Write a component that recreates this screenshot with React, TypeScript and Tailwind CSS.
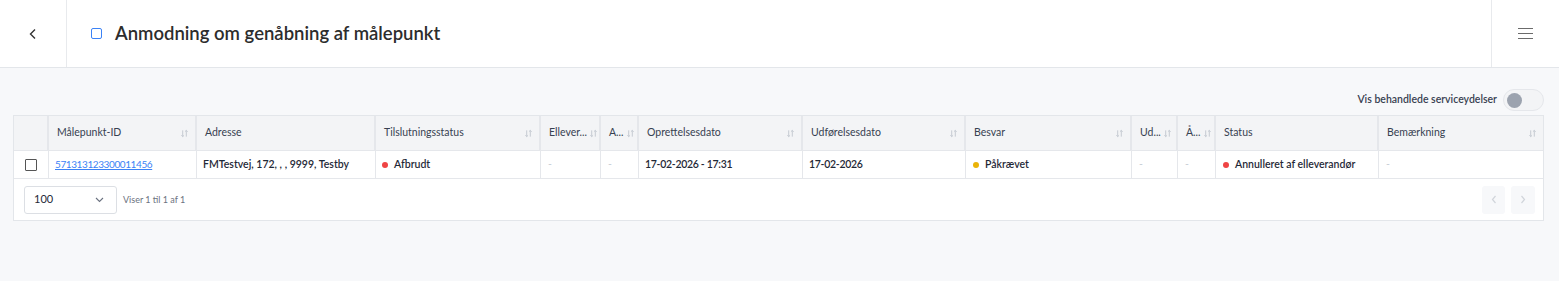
import React from 'react';

const font = { fontFamily: 'Lato, "Noto Sans", sans-serif' };

interface Column {
  label: string;
  sortable: boolean;
}

const columns: Column[] = [
  { label: 'Målepunkt-ID', sortable: true },
  { label: 'Adresse', sortable: false },
  { label: 'Tilslutningsstatus', sortable: true },
  { label: 'Ellever...', sortable: true },
  { label: 'A...', sortable: true },
  { label: 'Oprettelsesdato', sortable: true },
  { label: 'Udførelsesdato', sortable: true },
  { label: 'Besvar', sortable: true },
  { label: 'Ud...', sortable: true },
  { label: 'Å...', sortable: true },
  { label: 'Status', sortable: false },
  { label: 'Bemærkning', sortable: true },
];

const gridCols =
  'grid grid-cols-[35px_148px_179px_165px_60px_38px_164px_163px_166px_46px_38px_163px_164px]';

const SortIcon = () => (
  <svg width="9" height="9" viewBox="0 0 10 10" fill="none" stroke="#c4c9d1" strokeWidth="1.1" className="shrink-0">
    <path d="M3 1.5v7M1.5 7l1.5 1.5L4.5 7" />
    <path d="M7 8.5v-7M5.5 3L7 1.5 8.5 3" />
  </svg>
);

const Dot = ({ color }: { color: string }) => (
  <span className={`inline-block w-[6px] h-[6px] rounded-full mr-[6px] ${color}`} />
);

const Dash = () => <span className="text-[#c9ced6]">-</span>;

const App: React.FC = () => {
  return (
    <div className="w-[1559px] h-[281px] bg-[#f7f8fa] text-[#1f2937]" style={font}>
      {/* Top bar */}
      <div className="h-[68px] bg-white border-b border-[#e3e6ea] flex items-stretch">
        <div className="w-[67px] border-r border-[#e8eaed] flex items-center justify-center">
          <svg width="10" height="12" viewBox="0 0 10 12" fill="none" stroke="#333" strokeWidth="1.4">
            <path d="M7 1.5L2.5 6 7 10.5" />
          </svg>
        </div>
        <div className="flex-1 flex items-center pl-[24px]">
          <span className="w-[11px] h-[11px] border border-[#3b82f6] rounded-[2px] mr-[13px]" />
          <h1 className="text-[18.5px] font-semibold text-[#2d2d2d]">
            Anmodning om genåbning af målepunkt
          </h1>
        </div>
        <div className="w-[68px] border-l border-[#e8eaed] flex items-center justify-center">
          <svg width="15" height="13" viewBox="0 0 15 13" fill="none" stroke="#6b6b6b" strokeWidth="1.2">
            <path d="M0 1.5h15M0 6.5h15M0 11.5h15" />
          </svg>
        </div>
      </div>

      {/* Toggle row */}
      <div className="flex items-center justify-end pr-[15px] pt-[17px] h-[47px]">
        <span className="text-[10.5px] font-semibold text-[#374151] mr-[6px]">Vis behandlede serviceydelser</span>
        <div className="w-[41px] h-[22px] rounded-full bg-[#f3f4f6] border border-[#e5e7eb] flex items-center pl-[3px]">
          <span className="w-[15px] h-[15px] rounded-full bg-[#9ca3af]" />
        </div>
      </div>

      {/* Table */}
      <div className="mx-[13px] w-[1531px] bg-white border border-[#e3e6ea]">
        <div className={`${gridCols} h-[34px] bg-[#f3f4f6] text-[10.5px] text-[#374151]`}>
          <div className="border-r-2 border-[#e5e7eb]" />
          {columns.map((c, i) => (
            <div
              key={c.label}
              className={`flex items-center justify-between pl-[8px] pr-[6px] gap-[2px] whitespace-nowrap ${
                i < columns.length - 1 ? 'border-r-2 border-[#e5e7eb]' : ''
              }`}
            >
              <span>{c.label}</span>
              {c.sortable && <SortIcon />}
            </div>
          ))}
        </div>
        <div className={`${gridCols} h-[28px] border-t border-[#e5e7eb] text-[10.5px] font-semibold text-[#1f2937]`}>
          <div className="flex items-center justify-center border-r border-[#e5e7eb]">
            <span className="w-[12px] h-[12px] border border-[#555] rounded-[1px] bg-white" />
          </div>
          <div className="flex items-center pl-[6px] border-r border-[#e5e7eb]">
            <span className="text-[#3b82f6] underline font-normal text-[10px] tracking-[-0.4px]">571313123300011456</span>
          </div>
          <div className="flex items-center pl-[6px] border-r border-[#e5e7eb]">FMTestvej, 172, , , 9999, Testby</div>
          <div className="flex items-center pl-[6px] border-r border-[#e5e7eb]">
            <Dot color="bg-[#ef4444]" />
            Afbrudt
          </div>
          <div className="flex items-center pl-[7px] border-r border-[#e5e7eb] font-normal"><Dash /></div>
          <div className="flex items-center pl-[7px] border-r border-[#e5e7eb] font-normal"><Dash /></div>
          <div className="flex items-center pl-[6px] border-r border-[#e5e7eb] tracking-[-0.3px]">17-02-2026 - 17:31</div>
          <div className="flex items-center pl-[6px] border-r border-[#e5e7eb] tracking-[-0.3px]">17-02-2026</div>
          <div className="flex items-center pl-[7px] border-r border-[#e5e7eb]">
            <Dot color="bg-[#eab308]" />
            Påkrævet
          </div>
          <div className="flex items-center pl-[7px] border-r border-[#e5e7eb] font-normal"><Dash /></div>
          <div className="flex items-center pl-[7px] border-r border-[#e5e7eb] font-normal"><Dash /></div>
          <div className="flex items-center pl-[7px] border-r border-[#e5e7eb]">
            <Dot color="bg-[#ef4444]" />
            Annulleret af elleverandør
          </div>
          <div className="flex items-center pl-[7px] font-normal"><Dash /></div>
        </div>
        <div className="h-[42px] border-t border-[#e5e7eb] flex items-center pl-[10px] pr-[8px]">
          <div className="w-[93px] h-[28px] border border-[#dcdfe4] rounded-[3px] flex items-center justify-between pl-[9px] pr-[12px] text-[11px] text-[#1f2937]">
            <span>100</span>
            <svg width="9" height="6" viewBox="0 0 9 6" fill="none" stroke="#6b7280" strokeWidth="1.1">
              <path d="M1 1l3.5 3.5L8 1" />
            </svg>
          </div>
          <span className="ml-[6px] text-[9px] text-[#6b7280]">Viser 1 til 1 af 1</span>
          <div className="ml-auto flex gap-[6px]">
            <div className="w-[23px] h-[28px] rounded-[3px] bg-[#f7f8fa] flex items-center justify-center">
              <svg width="6" height="9" viewBox="0 0 6 9" fill="none" stroke="#d1d5db" strokeWidth="1.2">
                <path d="M4.5 1L1.5 4.5 4.5 8" />
              </svg>
            </div>
            <div className="w-[24px] h-[28px] rounded-[3px] bg-[#f7f8fa] flex items-center justify-center">
              <svg width="6" height="9" viewBox="0 0 6 9" fill="none" stroke="#d1d5db" strokeWidth="1.2">
                <path d="M1.5 1l3 3.5-3 3.5" />
              </svg>
            </div>
          </div>
        </div>
      </div>
    </div>
  );
};

export default App;
